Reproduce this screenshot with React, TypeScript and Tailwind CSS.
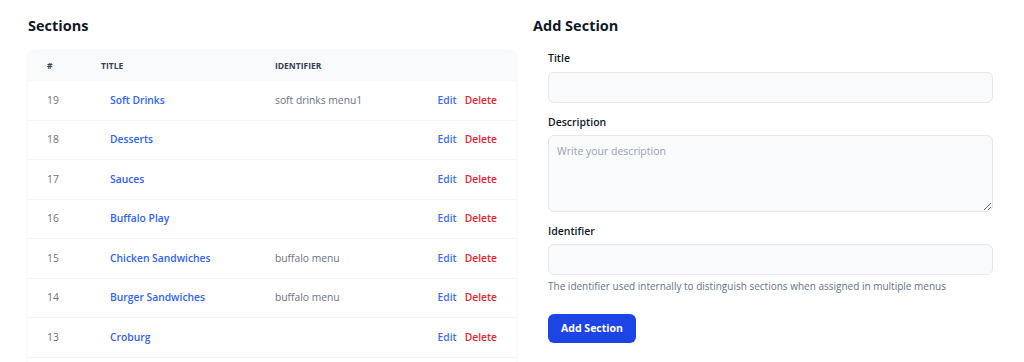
import React from 'react';

const sections = [
  { id: 19, title: 'Soft Drinks', identifier: 'soft drinks menu1' },
  { id: 18, title: 'Desserts', identifier: '' },
  { id: 17, title: 'Sauces', identifier: '' },
  { id: 16, title: 'Buffalo Play', identifier: '' },
  { id: 15, title: 'Chicken Sandwiches', identifier: 'buffalo menu' },
  { id: 14, title: 'Burger Sandwiches', identifier: 'buffalo menu' },
  { id: 13, title: 'Croburg', identifier: '' },
];

export default function App() {
  return (
    <div className="min-h-screen bg-white font-['Open_Sans',sans-serif] text-gray-900">
      <div className="flex gap-[17px] pl-[28px] pr-[16px] pt-[15px]">
        {/* Sections table */}
        <section className="w-[488px] shrink-0">
          <h2 className="text-[14.5px] font-bold leading-[22px] text-gray-900">Sections</h2>
          <div className="mt-[14px] bg-white rounded-md shadow-[0_0_3px_rgba(0,0,0,0.08)] overflow-hidden">
            <div className="flex items-center h-[30px] bg-gray-50 text-[8.5px] font-bold uppercase text-gray-700">
              <div className="w-[73px] pl-[19px]">#</div>
              <div className="w-[174px]">Title</div>
              <div className="flex-1">Identifier</div>
            </div>
            {sections.map((s) => (
              <SectionRow key={s.id} {...s} />
            ))}
            <div className="h-[39.5px]" />
          </div>
        </section>

        {/* Add form */}
        <section className="flex-1">
          <h2 className="text-[14.5px] font-bold leading-[22px] text-gray-900">Add Section</h2>
          <form className="px-[15px] mt-[13px]">
            <label className="block text-[10.5px] font-semibold leading-[16px] text-gray-900">Title</label>
            <input
              type="text"
              className="mt-[6px] block w-full h-[31px] rounded-md border border-gray-200 bg-gray-50 px-[8px] text-[11px] outline-none"
            />
            <label className="block mt-[11px] text-[10.5px] font-semibold leading-[16px] text-gray-900">Description</label>
            <textarea
              placeholder="Write your description"
              className="mt-[5px] block w-full h-[77px] rounded-md border border-gray-200 bg-gray-50 px-[8px] py-[7px] text-[10.5px] leading-[16px] outline-none placeholder:text-gray-400"
            />
            <label className="block mt-[11px] text-[10.5px] font-semibold leading-[16px] text-gray-900">Identifier</label>
            <input
              type="text"
              className="mt-[5px] block w-full h-[31px] rounded-md border border-gray-200 bg-gray-50 px-[8px] text-[11px] outline-none"
            />
            <p className="mt-[3px] text-[10px] leading-[16px] text-gray-500">
              The identifier used internally to distinguish sections when assigned in multiple menus
            </p>
            <button
              type="button"
              className="mt-[20px] h-[29px] w-[88px] rounded-md bg-[#1d45e6] text-[10.5px] font-bold text-white"
            >
              Add Section
            </button>
          </form>
        </section>
      </div>
    </div>
  );
}

function SectionRow({ id, title, identifier }: { id: number; title: string; identifier: string }) {
  return (
    <div className="flex items-center h-[39.5px] border-b border-gray-100 text-[10.3px]">
      <div className="w-[73px] pl-[19px] text-gray-500">{id}</div>
      <div className="w-[174px] pl-[9px] font-semibold text-[#2f63f0]">{title}</div>
      <div className="flex-1 text-gray-500">{identifier}</div>
      <div className="flex gap-[8px] pr-[19px] font-semibold">
        <a className="text-[#3b6ef5]">Edit</a>
        <a className="text-[#ec1c33]">Delete</a>
      </div>
    </div>
  );
}
